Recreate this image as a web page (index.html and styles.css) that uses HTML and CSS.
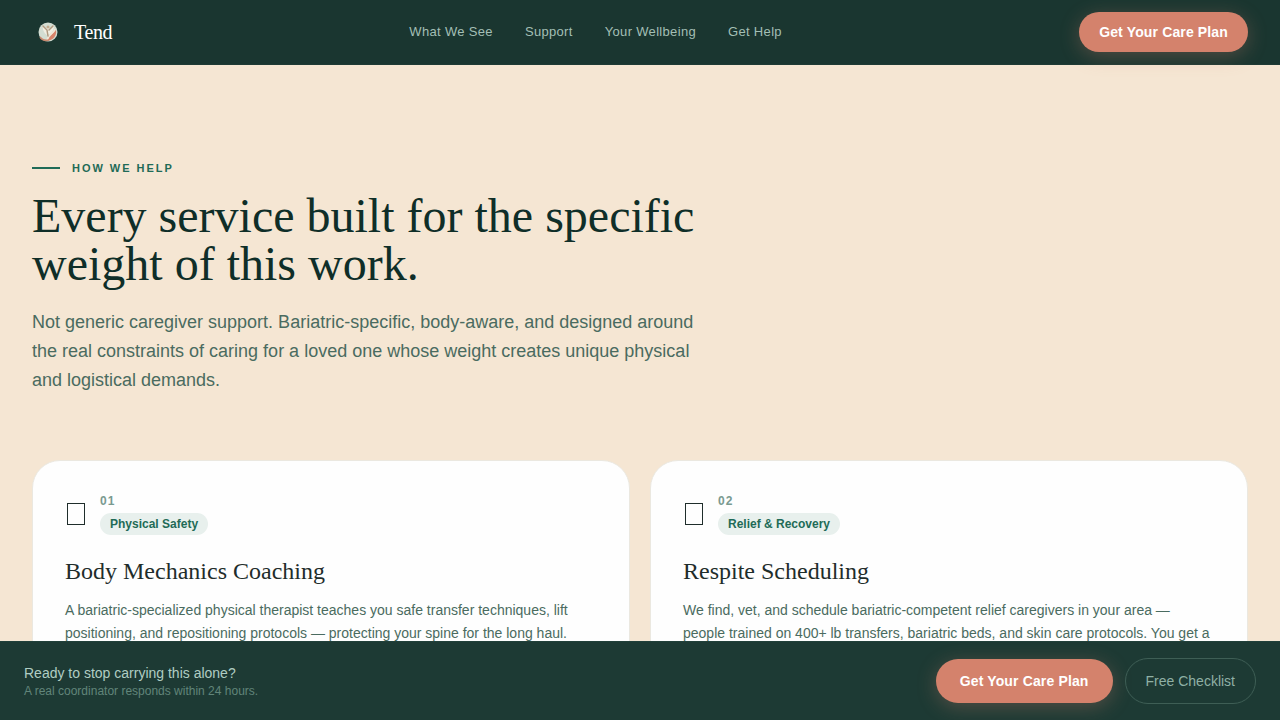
FILE: index.html
```html
<!DOCTYPE html>
<html lang="en">
<head>
    <meta charset="UTF-8">
    <meta name="viewport" content="width=device-width, initial-scale=1.0">
    <title>Tend</title>
    <link rel="stylesheet" href="styles.css">
</head>
<body>
    <header class="header">
        <a href="#" class="logo">
            <svg class="logo-mark" viewBox="0 0 32 32" aria-hidden="true">
                <circle cx="16" cy="16" r="9.5" fill="#d3ddd2"/>
                <path d="M11 9c-1 4 1 8 4 10l3-1c3-2 4-5 4-9l-4 3h-4z" fill="#f1eee2"/>
                <path d="M24 14c1 6-3 10-9 11 3-5 6-8 9-11z" fill="#d9836a"/>
                <path d="M23 13c-1 4-4 5-6 7l-2 4" fill="none" stroke="#f6e6d4" stroke-width="1.5"/>
                <path d="M11 10l4 4 1 6M21 10l-4 4" fill="none" stroke="#b09a80" stroke-width="1.5" stroke-linecap="round"/>
                <circle cx="16" cy="11" r="1.5" fill="#c2ab8e"/>
                <path d="M8 21c2 3 5 4 9 3" fill="none" stroke="#c98a70" stroke-width="1.5"/>
            </svg>
            <span>Tend</span>
        </a>
        <nav class="nav">
            <a href="#see">What We See</a>
            <a href="#support">Support</a>
            <a href="#wellbeing">Your Wellbeing</a>
            <a href="#help">Get Help</a>
        </nav>
        <button type="button" class="btn btn-primary">Get Your Care Plan</button>
    </header>

    <main class="services" id="support">
        <p class="label">How we help</p>
        <h1>Every service built for the specific weight of this work.</h1>
        <p class="intro">Not generic caregiver support. Bariatric-specific, body-aware, and designed around the real constraints of caring for a loved one whose weight creates unique physical and logistical demands.</p>

        <div class="cards">
            <article class="card">
                <div class="card-top">
                    <span class="card-icon"></span>
                    <div class="card-meta">
                        <span class="num">01</span>
                        <span class="tag">Physical Safety</span>
                    </div>
                </div>
                <h2>Body Mechanics Coaching</h2>
                <p>A bariatric-specialized physical therapist teaches you safe transfer techniques, lift positioning, and repositioning protocols — protecting your spine for the long haul.</p>
            </article>
            <article class="card">
                <div class="card-top">
                    <span class="card-icon"></span>
                    <div class="card-meta">
                        <span class="num">02</span>
                        <span class="tag">Relief &amp; Recovery</span>
                    </div>
                </div>
                <h2>Respite Scheduling</h2>
                <p>We find, vet, and schedule bariatric-competent relief caregivers in your area — people trained on 400+ lb transfers, bariatric beds, and skin care protocols. You get a</p>
            </article>
        </div>
    </main>

    <!-- sticky bar -->
    <div class="cta-bar">
        <div class="cta-text">
            <p class="cta-title">Ready to stop carrying this alone?</p>
            <p class="cta-sub">A real coordinator responds within 24 hours.</p>
        </div>
        <div class="cta-actions">
            <button type="button" class="btn btn-primary btn-large">Get Your Care Plan</button>
            <button type="button" class="btn btn-ghost">Free Checklist</button>
        </div>
    </div>
</body>
</html>
```

FILE: styles.css
```css
* {
    margin: 0;
    padding: 0;
    box-sizing: border-box;
}
body {
    padding-bottom: 79px;
    background-color: #f5e6d3;
    color: #1f2d2b;
    font-family: "Liberation Sans", Arial, sans-serif;
}
a {
    text-decoration: none;
}

/* header */
.header {
    position: sticky;
    top: 0;
    z-index: 10;
    display: flex;
    align-items: center;
    justify-content: space-between;
    padding: 12px 32px;
    background-color: #1a3630;
    border-bottom: 1px solid #1f3b35;
}
.logo {
    display: flex;
    align-items: center;
    gap: 10px;
    color: #fff;
    font-family: "Liberation Serif", "Times New Roman", serif;
    font-size: 20px;
    letter-spacing: -0.02em;
}
.logo-mark {
    width: 32px;
    height: 32px;
}
.nav {
    display: flex;
    gap: 32px;
}
.nav a {
    color: #a3bfb5;
    font-size: 13px;
    line-height: 18px;
    letter-spacing: 0.025em;
}

/* buttons */
.btn {
    border: none;
    border-radius: 50px;
    font-family: inherit;
    font-size: 14px;
    cursor: pointer;
}
.btn-primary {
    padding: 0 20px;
    height: 40px;
    background-color: #d4826c;
    color: #fff;
    font-weight: 700;
    letter-spacing: 0.01em;
    box-shadow: 0 4px 20px rgba(212, 130, 108, 0.3);
}
.btn-large {
    padding: 0 24px;
    height: 44px;
}
.btn-ghost {
    padding: 0 20px;
    height: 46px;
    background-color: transparent;
    border: 1px solid #3e5e55;
    color: #8fb0a5;
}

/* services */
.services {
    padding: 96px 32px;
}
.label {
    display: flex;
    align-items: center;
    gap: 12px;
    margin-bottom: 17px;
    color: #1f6b57;
    font-size: 11px;
    font-weight: 700;
    line-height: 14px;
    letter-spacing: 0.18em;
    text-transform: uppercase;
}
.label::before {
    content: "";
    width: 28px;
    height: 2px;
    background-color: #1f6b57;
}
.services h1 {
    max-width: 680px;
    margin-bottom: 20px;
    color: #0f2e28;
    font-family: "Liberation Serif", "Times New Roman", serif;
    font-size: 48px;
    font-weight: 400;
    line-height: 48px;
}
.intro {
    max-width: 680px;
    margin-bottom: 65px;
    color: #4a6b60;
    font-size: 18px;
    line-height: 29px;
}

/* cards */
.cards {
    display: grid;
    grid-template-columns: 1fr 1fr;
    gap: 20px;
}
.card {
    padding: 32px;
    background-color: #fefefe;
    border: 1px solid #ebe8e0;
    border-radius: 28px;
}
.card-top {
    display: flex;
    align-items: center;
    gap: 15px;
    margin-bottom: 20px;
}
.card-icon {
    width: 18px;
    height: 22px;
    margin-left: 2px;
    border: 1px solid #1f2d2b;
}
.card-meta {
    display: flex;
    flex-direction: column;
    align-items: flex-start;
    gap: 4px;
}
.num {
    color: #7a9a90;
    font-size: 12px;
    font-weight: 700;
    line-height: 16px;
    letter-spacing: 0.08em;
}
.tag {
    padding: 0 10px;
    background-color: #e8f0ed;
    border-radius: 20px;
    color: #1f6b57;
    font-size: 12px;
    font-weight: 700;
    line-height: 22px;
}
.card h2 {
    margin-bottom: 12px;
    font-family: "Liberation Serif", "Times New Roman", serif;
    font-size: 24px;
    font-weight: 400;
    line-height: 32px;
}
.card p {
    color: #4a6b60;
    font-size: 14px;
    line-height: 23px;
}

/* bottom bar */
.cta-bar {
    position: fixed;
    left: 0;
    right: 0;
    bottom: 0;
    z-index: 10;
    display: flex;
    align-items: center;
    justify-content: space-between;
    padding: 16px 24px;
    background-color: #1d3a34;
    border-top: 1px solid #21403a;
}
.cta-title {
    color: #b0cdc3;
    font-size: 14px;
    line-height: 20px;
}
.cta-sub {
    color: #61857a;
    font-size: 12px;
    line-height: 16px;
}
.cta-actions {
    display: flex;
    align-items: center;
    gap: 12px;
}
```
